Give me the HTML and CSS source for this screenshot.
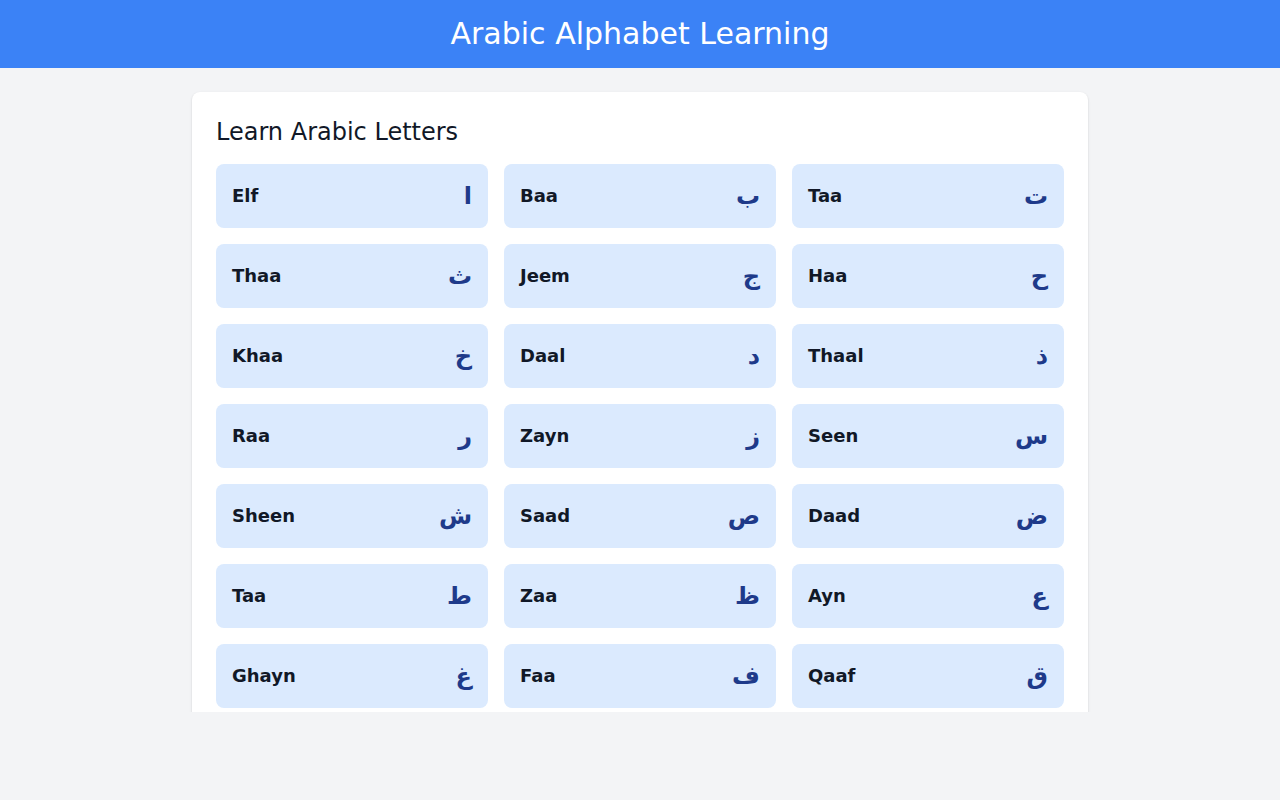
FILE: index.html
```html
<!DOCTYPE html>
<html lang="en">
<head>
<meta charset="utf-8">
<title>Arabic Alphabet Learning</title>
<link rel="stylesheet" href="styles.css">
</head>
<body>
<header class="topbar"><h1 class="title">Arabic Alphabet Learning</h1></header>
<main class="main">
  <section class="card">
    <h2 class="heading">Learn Arabic Letters</h2>
    <div class="grid">
      <div class="item"><span class="name">Elf</span><span class="letter">ا</span></div>
      <div class="item"><span class="name">Baa</span><span class="letter">ب</span></div>
      <div class="item"><span class="name">Taa</span><span class="letter">ت</span></div>
      <div class="item"><span class="name">Thaa</span><span class="letter">ث</span></div>
      <div class="item"><span class="name">Jeem</span><span class="letter">ج</span></div>
      <div class="item"><span class="name">Haa</span><span class="letter">ح</span></div>
      <div class="item"><span class="name">Khaa</span><span class="letter">خ</span></div>
      <div class="item"><span class="name">Daal</span><span class="letter">د</span></div>
      <div class="item"><span class="name">Thaal</span><span class="letter">ذ</span></div>
      <div class="item"><span class="name">Raa</span><span class="letter">ر</span></div>
      <div class="item"><span class="name">Zayn</span><span class="letter">ز</span></div>
      <div class="item"><span class="name">Seen</span><span class="letter">س</span></div>
      <div class="item"><span class="name">Sheen</span><span class="letter">ش</span></div>
      <div class="item"><span class="name">Saad</span><span class="letter">ص</span></div>
      <div class="item"><span class="name">Daad</span><span class="letter">ض</span></div>
      <div class="item"><span class="name">Taa</span><span class="letter">ط</span></div>
      <div class="item"><span class="name">Zaa</span><span class="letter">ظ</span></div>
      <div class="item"><span class="name">Ayn</span><span class="letter">ع</span></div>
      <div class="item"><span class="name">Ghayn</span><span class="letter">غ</span></div>
      <div class="item"><span class="name">Faa</span><span class="letter">ف</span></div>
      <div class="item"><span class="name">Qaaf</span><span class="letter">ق</span></div>
      <div class="item"><span class="name">Kaaf</span><span class="letter">ك</span></div>
      <div class="item"><span class="name">Laam</span><span class="letter">ل</span></div>
      <div class="item"><span class="name">Meem</span><span class="letter">م</span></div>
      <div class="item"><span class="name">Noon</span><span class="letter">ن</span></div>
      <div class="item"><span class="name">Haa</span><span class="letter">ه</span></div>
      <div class="item"><span class="name">Waw</span><span class="letter">و</span></div>
      <div class="item"><span class="name">Yaa</span><span class="letter">ي</span></div>
    </div>
  </section>
</main>
</body>
</html>
```

FILE: styles.css
```css
* { box-sizing: border-box; }
html, body { margin: 0; padding: 0; }
body {
  background: #f3f4f6;
  font-family: "DejaVu Sans", sans-serif;
  color: #111827;
  height: 800px;
  overflow: hidden;
}
.topbar {
  background: #3b82f6;
  height: 68px;
  display: flex;
  align-items: center;
  justify-content: center;
}
.title {
  margin: 0;
  color: #ffffff;
  font-size: 30px;
  font-weight: 400;
  line-height: 36px;
}
.main {
  height: 644px;
  padding-top: 24px;
  overflow: hidden;
}
.card {
  width: 896px;
  margin: 0 auto;
  background: #ffffff;
  border-radius: 8px;
  box-shadow: 0 1px 3px rgba(0,0,0,0.1), 0 1px 2px rgba(0,0,0,0.06);
  padding: 24px;
}
.heading {
  margin: 0 0 16px 0;
  font-size: 24px;
  font-weight: 400;
  line-height: 32px;
  color: #111827;
}
.grid {
  display: grid;
  grid-template-columns: repeat(3, 1fr);
  gap: 16px;
}
.item {
  background: #dbeafe;
  border-radius: 8px;
  padding: 16px;
  height: 64px;
  display: flex;
  justify-content: space-between;
  align-items: center;
}
.name {
  font-size: 18px;
  font-weight: 700;
  line-height: 28px;
  color: #111827;
}
.letter {
  font-size: 24px;
  font-weight: 700;
  line-height: 32px;
  color: #1e3a8a;
}
```
